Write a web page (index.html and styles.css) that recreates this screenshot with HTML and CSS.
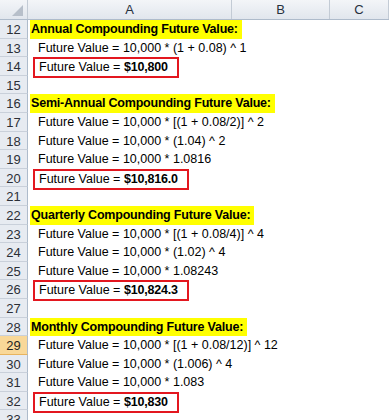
FILE: index.html
```html
<!DOCTYPE html>
<html lang="en">
<head>
  <meta charset="UTF-8">
  <meta name="viewport" content="width=device-width, initial-scale=1.0">
  <title>Compounding Future Value</title>
  <link rel="stylesheet" href="styles.css">
</head>
<body>
  <div class="sheet">
    <div class="row header">
      <div class="corner"><span class="tri"></span></div>
      <div class="colhead col-a">A</div>
      <div class="colhead col-b">B</div>
      <div class="colhead col-c">C</div>
    </div>

    <!-- annual -->
    <div class="row"><div class="rh">12</div><div class="cell"><span class="title">Annual Compounding Future Value:</span></div></div>
    <div class="row"><div class="rh">13</div><div class="cell formula">Future Value = 10,000 * (1 + 0.08) ^ 1</div></div>
    <div class="row"><div class="rh">14</div><div class="cell"><span class="result">Future Value = <b>$10,800</b></span></div></div>
    <div class="row"><div class="rh">15</div><div class="cell"></div></div>

    <!-- semi-annual -->
    <div class="row"><div class="rh">16</div><div class="cell"><span class="title">Semi-Annual Compounding Future Value:</span></div></div>
    <div class="row"><div class="rh">17</div><div class="cell formula">Future Value = 10,000 * [(1 + 0.08/2)] ^ 2</div></div>
    <div class="row"><div class="rh">18</div><div class="cell formula">Future Value = 10,000 * (1.04) ^ 2</div></div>
    <div class="row"><div class="rh">19</div><div class="cell formula">Future Value = 10,000 * 1.0816</div></div>
    <div class="row"><div class="rh">20</div><div class="cell"><span class="result">Future Value = <b>$10,816.0</b></span></div></div>
    <div class="row"><div class="rh">21</div><div class="cell"></div></div>

    <!-- quarterly -->
    <div class="row"><div class="rh">22</div><div class="cell"><span class="title">Quarterly Compounding Future Value:</span></div></div>
    <div class="row"><div class="rh">23</div><div class="cell formula">Future Value = 10,000 * [(1 + 0.08/4)] ^ 4</div></div>
    <div class="row"><div class="rh">24</div><div class="cell formula">Future Value = 10,000 * (1.02) ^ 4</div></div>
    <div class="row"><div class="rh">25</div><div class="cell formula">Future Value = 10,000 * 1.08243</div></div>
    <div class="row"><div class="rh">26</div><div class="cell"><span class="result">Future Value = <b>$10,824.3</b></span></div></div>
    <div class="row"><div class="rh">27</div><div class="cell"></div></div>

    <!-- monthly -->
    <div class="row"><div class="rh">28</div><div class="cell"><span class="title">Monthly Compounding Future Value:</span></div></div>
    <div class="row"><div class="rh active">29</div><div class="cell formula">Future Value = 10,000 * [(1 + 0.08/12)] ^ 12</div></div>
    <div class="row"><div class="rh">30</div><div class="cell formula">Future Value = 10,000 * (1.006) ^ 4</div></div>
    <div class="row"><div class="rh">31</div><div class="cell formula">Future Value = 10,000 * 1.083</div></div>
    <div class="row"><div class="rh">32</div><div class="cell"><span class="result">Future Value = <b>$10,830</b></span></div></div>
    <div class="row"><div class="rh">33</div><div class="cell"></div></div>
  </div>
</body>
</html>
```

FILE: styles.css
```css
body {
  margin: 0;
  padding: 0;
  background-color: #fff;
  font-family: "Liberation Sans", Arial, sans-serif;
  font-size: 12.5px;
  color: #000;
}
.sheet {
  width: 389px;
  overflow: hidden;
}
.row {
  display: flex;
  height: 18.6px;
}
.header {
  height: 20px;
  background: linear-gradient(#f3f5f8, #e1e6ed);
  border-bottom: 1px solid #aebbcb;
  box-sizing: border-box;
}
.corner {
  position: relative;
  width: 28px;
  flex: none;
  border-right: 1px solid #c3cbd5;
  box-sizing: border-box;
}
.tri {
  position: absolute;
  right: 4px;
  bottom: 3px;
  width: 0;
  height: 0;
  border-left: 11px solid transparent;
  border-bottom: 11px solid #b7bfca;
}
.colhead {
  flex: none;
  text-align: center;
  line-height: 19px;
  color: #27303d;
  font-size: 13px;
  border-right: 1px solid #c3cbd5;
  box-sizing: border-box;
}
.col-a {
  width: 204px;
}
.col-b {
  width: 98px;
}
.col-c {
  width: 59px;
}
.rh {
  flex: none;
  width: 28px;
  box-sizing: border-box;
  background-color: #e7ebf1;
  border-right: 1px solid #aebbcb;
  border-bottom: 1px solid #c9d0da;
  text-align: center;
  line-height: 19px;
  font-size: 13px;
  color: #2b2f36;
}
.rh.active {
  background-color: #f9d898;
  border-bottom-color: #e8b45e;
  color: #1f1f1f;
}
.cell {
  flex: 1;
  white-space: nowrap;
  line-height: 19px;
}
.formula {
  padding-left: 10px;
}
.title {
  display: inline-block;
  margin-left: 2px;
  padding: 0 4px 0 1px;
  background-color: #ffff00;
  font-weight: bold;
  letter-spacing: -0.2px;
  height: 18.6px;
}
.result {
  display: inline-block;
  margin-left: 5px;
  padding: 0 9px 0 4px;
  border: 2px solid #e3171f;
  line-height: 17px;
  position: relative;
  top: 0px;
}
.result b {
  letter-spacing: -0.2px;
}
```
